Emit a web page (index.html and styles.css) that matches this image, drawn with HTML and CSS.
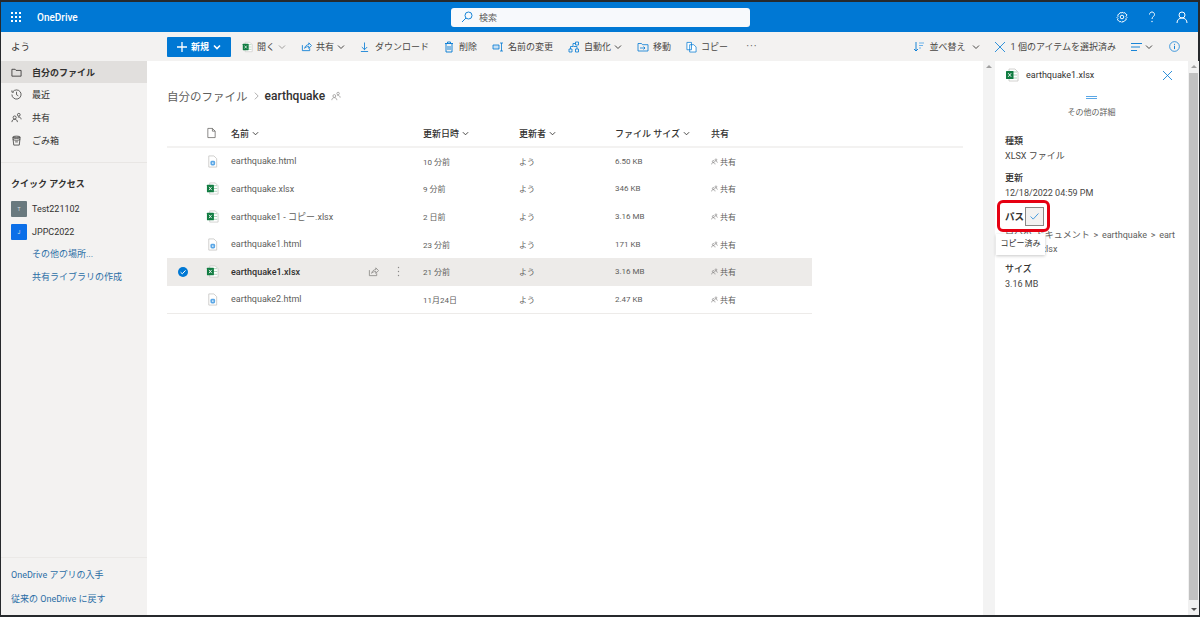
FILE: index.html
```html
<!DOCTYPE html>
<html lang="ja">
<head>
<meta charset="utf-8">
<title>OneDrive</title>
<link rel="stylesheet" href="styles.css">
</head>
<body>
<svg class="defs" width="0" height="0" aria-hidden="true">
  <symbol id="xl" viewBox="0 0 14 14">
    <path d="M4 1h6l3 3v9H4z" fill="#fff" stroke="#c8c6c4" stroke-width=".8"/>
    <path d="M8 4h4M8 7h4M8 10h4" stroke="#a9d3b8" stroke-width="1"/>
    <rect x="1" y="3" width="7.500" height="8" rx=".6" fill="#107c41"/>
    <path d="M3.200 5.200l3 3.600M6.200 5.200l-3 3.600" stroke="#fff" stroke-width=".9"/>
  </symbol>
  <symbol id="doc" viewBox="0 0 14 14">
    <path d="M3 1h5.500L11.500 4v9H3z" fill="#fff" stroke="#c8c6c4" stroke-width=".9"/>
    <rect x="4.800" y="6.200" width="5" height="5" rx="1.600" fill="#5ba7e6"/>
    <circle cx="7.300" cy="8.700" r="1" fill="#d6eafa"/>
  </symbol>
  <symbol id="people" viewBox="0 0 12 12">
    <circle cx="4" cy="6" r="1.700" fill="none" stroke="currentColor" stroke-width=".8"/>
    <path d="M1 11c0-2 1.300-3 3-3s3 1 3 3" fill="none" stroke="currentColor" stroke-width=".8"/>
    <circle cx="8.500" cy="3" r="1.500" fill="none" stroke="currentColor" stroke-width=".8"/>
    <path d="M7.500 5.500c2-.4 3.500.6 3.500 2.500" fill="none" stroke="currentColor" stroke-width=".8"/>
  </symbol>
  <symbol id="chev" viewBox="0 0 8 8"><path d="M1 2.500l3 3 3-3" fill="none" stroke="currentColor" stroke-width="1"/></symbol>
  <symbol id="share" viewBox="0 0 12 12">
    <path d="M1.500 4.500v6h8V8M4 8c.4-2.500 2.300-4 4.500-4V2l3 3-3 3V6C6.500 6 5 6.700 4 8z" fill="none" stroke="currentColor" stroke-width=".9"/>
  </symbol>
</svg>

<div class="app">
  <header class="topbar">
    <svg class="waffle" viewBox="0 0 10 10" width="10" height="10"><g fill="#fff"><rect width="2" height="2"/><rect x="4" width="2" height="2"/><rect x="8" width="2" height="2"/><rect y="4" width="2" height="2"/><rect x="4" y="4" width="2" height="2"/><rect x="8" y="4" width="2" height="2"/><rect y="8" width="2" height="2"/><rect x="4" y="8" width="2" height="2"/><rect x="8" y="8" width="2" height="2"/></g></svg>
    <span class="brand">OneDrive</span>
    <div class="search">
      <svg viewBox="0 0 12 12" width="12" height="12"><circle cx="7.500" cy="4.500" r="3.500" fill="none" stroke="#0078d4" stroke-width=".9"/><path d="M5 7L1 11" stroke="#0078d4" stroke-width=".9"/></svg>
      <span>検索</span>
    </div>
    <div class="top-icons">
      <svg viewBox="0 0 12 12" width="12" height="12"><circle cx="6" cy="6" r="1.800" fill="none" stroke="#fff"/><path d="M6 1l1.200 1 1.600-.4.800 1.400 1.400.8L10 5.500 11 6.500l-1 1 .2 1.300-1.400.6-.8 1.300-1.500-.3L6 11.500l-1-1-1.500.3-.8-1.300-1.400-.6L2 7.500l-1-1 1-1-.2-1.700 1.400-.8.800-1.400 1.600.4z" fill="none" stroke="#fff" stroke-width=".9"/></svg>
      <svg viewBox="0 0 12 12" width="12" height="12"><path d="M3.500 3.500C3.500 2 4.700 1 6 1s2.500 1 2.500 2.500c0 2-2.500 2.200-2.500 4.500" fill="none" stroke="#fff"/><circle cx="6" cy="10.500" r=".7" fill="#fff"/></svg>
      <svg viewBox="0 0 12 12" width="12" height="12"><circle cx="6" cy="4" r="3" fill="none" stroke="#fff"/><path d="M1 12c0-3 2-5 5-5s5 2 5 5" fill="none" stroke="#fff"/></svg>
    </div>
  </header>

  <div class="workspace">
    <nav class="sidenav">
      <div class="user">よう</div>
      <a class="nav-row active">
        <svg viewBox="0 0 12 12" width="11" height="11"><path d="M1 2.500h3.500l1 1.200H11V10H1z" fill="none" stroke="#323130" stroke-width=".9"/></svg>
        <span>自分のファイル</span>
      </a>
      <a class="nav-row">
        <svg viewBox="0 0 12 12" width="11" height="11"><path d="M2 3a5 5 0 1 1-1 3M1 1.500V3.500h2M6 3v3.200l2 1.300" fill="none" stroke="#323130" stroke-width=".8"/></svg>
        <span>最近</span>
      </a>
      <a class="nav-row">
        <svg width="11" height="11" class="ink"><use href="#people"/></svg>
        <span>共有</span>
      </a>
      <a class="nav-row">
        <svg viewBox="0 0 12 12" width="11" height="11"><path d="M2 2.500h8L9 11H3zM2 5c2 1 6 1 8 0M4.500 7.500h3" fill="none" stroke="#323130" stroke-width=".8"/><ellipse cx="6" cy="2.500" rx="4" ry="1.300" fill="none" stroke="#323130" stroke-width=".8"/></svg>
        <span>ごみ箱</span>
      </a>
      <div class="nav-sep"></div>
      <div class="nav-title">クイック アクセス</div>
      <a class="site-row"><i class="avatar slate">T</i><span>Test221102</span></a>
      <a class="site-row"><i class="avatar blue">J</i><span>JPPC2022</span></a>
      <a class="link-row">その他の場所...</a>
      <a class="link-row">共有ライブラリの作成</a>
      <div class="nav-foot">
        <a>OneDrive アプリの入手</a>
        <a>従来の OneDrive に戻す</a>
      </div>
    </nav>

    <div class="main">
      <div class="cmdbar">
        <button class="new-btn">
          <svg viewBox="0 0 10 10" width="10" height="10"><path d="M5 0v10M0 5h10" stroke="#fff" stroke-width="1.300"/></svg>
          <span>新規</span>
          <svg viewBox="0 0 8 8" width="8" height="8"><path d="M1 2.500l3 3 3-3" fill="none" stroke="#fff" stroke-width="1.600"/></svg>
        </button>
        <div class="cmd"><svg width="11" height="12"><use href="#xl"/></svg><span>開く</span><svg width="8" height="8" class="chev faint"><use href="#chev"/></svg></div>
        <div class="cmd"><svg width="11" height="11" class="blue-ic"><use href="#share"/></svg><span>共有</span><svg width="8" height="8" class="chev"><use href="#chev"/></svg></div>
        <div class="cmd wide"><svg viewBox="0 0 10 12" width="9" height="12"><path d="M5 1v8M2 6l3 3 3-3M1 11h8" fill="none" stroke="#0078d4" stroke-width=".9"/></svg><span>ダウンロード</span></div>
        <div class="cmd mid"><svg viewBox="0 0 10 12" width="10" height="12"><path d="M1 2.500h8M3.500 2.500V1h3v1.500M2 2.500V11h6V2.500M4 5v4M6 5v4" fill="none" stroke="#0078d4" stroke-width=".9"/></svg><span>削除</span></div>
        <div class="cmd"><svg viewBox="0 0 12 12" width="12" height="12"><path d="M1 4h6v4H1z" fill="#c7e0f4" stroke="#0078d4" stroke-width=".8"/><path d="M9.500 2v8M8 2h3M8 10h3" fill="none" stroke="#0078d4" stroke-width=".8"/></svg><span>名前の変更</span></div>
        <div class="cmd"><svg viewBox="0 0 12 12" width="12" height="12"><path d="M7.500 1h3v3h-3zM1 8h3v3H1zM7.500 8h3v3h-3zM7.500 2.500H5v3H2.500V8M5.500 5.500H9V8" fill="none" stroke="#0078d4" stroke-width=".8"/></svg><span>自動化</span><svg width="8" height="8" class="chev"><use href="#chev"/></svg></div>
        <div class="cmd"><svg viewBox="0 0 12 12" width="12" height="12"><path d="M1 2.500h3.500l1 1.200H11V10H1zM3 7h5M6.500 5.500L8 7 6.500 8.500" fill="none" stroke="#0078d4" stroke-width=".8"/></svg><span>移動</span></div>
        <div class="cmd"><svg viewBox="0 0 12 12" width="11" height="12"><path d="M1 1h5v8H1zM4 3.500h4.500L11 6v5.500H4z" fill="#fff" stroke="#0078d4" stroke-width=".8"/></svg><span>コピー</span></div>
        <div class="cmd more">···</div>
        <div class="cmd-right">
          <div class="cmd sort"><svg viewBox="0 0 12 12" width="12" height="12"><path d="M3 1v9M1 8l2 2 2-2" fill="none" stroke="#0078d4" stroke-width=".9"/><path d="M6 2h5M6 4.500h4M6 7h2" stroke="#6db2ea" stroke-width="1.100"/></svg><span>並べ替え</span><svg width="8" height="8" class="chev"><use href="#chev"/></svg></div>
          <div class="cmd sel"><svg viewBox="0 0 10 10" width="10" height="10"><path d="M0 0l10 10M10 0L0 10" stroke="#0078d4" stroke-width=".8"/></svg><span>1 個のアイテムを選択済み</span></div>
          <div class="cmd view"><svg viewBox="0 0 11 10" width="11" height="10"><path d="M0 1.500h11M0 5h9M0 8.500h6" stroke="#0078d4" stroke-width=".9"/></svg><svg width="8" height="8" class="chev"><use href="#chev"/></svg></div>
          <svg class="info" viewBox="0 0 12 12" width="11" height="11"><circle cx="6" cy="6" r="5.300" fill="none" stroke="#0078d4" stroke-width=".8"/><path d="M6 5.200v3.600" stroke="#0078d4"/><circle cx="6" cy="3.500" r=".6" fill="#0078d4"/></svg>
        </div>
      </div>

      <div class="panes">
        <section class="files">
          <div class="crumbs">
            <span class="crumb">自分のファイル</span>
            <svg viewBox="0 0 6 10" width="5" height="10"><path d="M1 1l4 4-4 4" fill="none" stroke="#8a8886" stroke-width=".8"/></svg>
            <strong>earthquake</strong>
            <svg width="10" height="10" class="muted"><use href="#people"/></svg>
          </div>

          <div class="list-head grid">
            <span></span>
            <svg class="ficon" viewBox="0 0 12 12" width="11" height="12"><path d="M2 1h5l3 3v7H2zM7 1v3h3" fill="none" stroke="#605e5c" stroke-width=".8"/></svg>
            <span class="hcell">名前<svg width="7" height="7"><use href="#chev"/></svg></span>
            <span class="hcell">更新日時<svg width="7" height="7"><use href="#chev"/></svg></span>
            <span class="hcell">更新者<svg width="7" height="7"><use href="#chev"/></svg></span>
            <span class="hcell">ファイル サイズ<svg width="7" height="7"><use href="#chev"/></svg></span>
            <span class="hcell">共有</span>
          </div>

          <div class="rows">
            <div class="row grid"><span></span><svg class="ficon" width="13" height="13"><use href="#doc"/></svg><span class="fname">earthquake.html</span><span class="sm">10 分前</span><span class="sm">よう</span><span class="sm">6.50 KB</span><span class="sm shared"><svg width="7" height="7"><use href="#people"/></svg>共有</span></div>
            <div class="row grid"><span></span><svg class="ficon" width="13" height="13"><use href="#xl"/></svg><span class="fname">earthquake.xlsx</span><span class="sm">9 分前</span><span class="sm">よう</span><span class="sm">346 KB</span><span class="sm shared"><svg width="7" height="7"><use href="#people"/></svg>共有</span></div>
            <div class="row grid"><span></span><svg class="ficon" width="13" height="13"><use href="#xl"/></svg><span class="fname">earthquake1 - コピー.xlsx</span><span class="sm">2 日前</span><span class="sm">よう</span><span class="sm">3.16 MB</span><span class="sm shared"><svg width="7" height="7"><use href="#people"/></svg>共有</span></div>
            <div class="row grid"><span></span><svg class="ficon" width="13" height="13"><use href="#doc"/></svg><span class="fname">earthquake1.html</span><span class="sm">23 分前</span><span class="sm">よう</span><span class="sm">171 KB</span><span class="sm shared"><svg width="7" height="7"><use href="#people"/></svg>共有</span></div>
            <div class="row grid selected">
              <svg class="check" viewBox="0 0 10 10" width="10" height="10"><circle cx="5" cy="5" r="5" fill="#0078d4"/><path d="M2.600 5.200l1.700 1.600 3.200-3.400" fill="none" stroke="#fff" stroke-width="1"/></svg>
              <svg class="ficon" width="13" height="13"><use href="#xl"/></svg>
              <span class="fname strong">
                <span>earthquake1.xlsx</span>
                <span class="row-acts">
                  <svg width="11" height="11" class="muted"><use href="#share"/></svg>
                  <svg viewBox="0 0 3 11" width="3" height="11"><g fill="#8a8886"><circle cx="1.500" cy="1.500" r=".7"/><circle cx="1.500" cy="5.500" r=".7"/><circle cx="1.500" cy="9.500" r=".7"/></g></svg>
                </span>
              </span>
              <span class="sm">21 分前</span><span class="sm">よう</span><span class="sm">3.16 MB</span><span class="sm shared"><svg width="7" height="7"><use href="#people"/></svg>共有</span>
            </div>
            <div class="row grid"><span></span><svg class="ficon" width="13" height="13"><use href="#doc"/></svg><span class="fname">earthquake2.html</span><span class="sm">11月24日</span><span class="sm">よう</span><span class="sm">2.47 KB</span><span class="sm shared"><svg width="7" height="7"><use href="#people"/></svg>共有</span></div>
          </div>
        </section>

        <div class="gutter"><i class="arrow up"></i></div>

        <aside class="details">
          <div class="d-head">
            <svg width="14" height="14"><use href="#xl"/></svg>
            <span class="d-name">earthquake1.xlsx</span>
            <svg class="d-close" viewBox="0 0 10 10" width="9" height="9"><path d="M0 0l10 10M10 0L0 10" stroke="#0078d4" stroke-width=".9"/></svg>
          </div>
          <div class="d-more">
            <svg viewBox="0 0 11 3" width="11" height="3"><path d="M0 .5h11M0 2.500h11" stroke="#5ba7e6"/></svg>
            <span>その他の詳細</span>
          </div>
          <div class="d-label first">種類</div>
          <div class="d-value">XLSX ファイル</div>
          <div class="d-label second">更新</div>
          <div class="d-value">12/18/2022 04:59 PM</div>
          <div class="d-path">
            <span class="d-strong">パス</span>
            <span class="copy"><svg viewBox="0 0 10 8" width="9" height="7"><path d="M.5 4l3 3 6-6.500" fill="none" stroke="#0078d4" stroke-width=".8"/></svg></span>
            <div class="tooltip">コピー済み</div>
            <div class="redbox"></div>
          </div>
          <div class="d-value pathtext">自分の ドキュメント &gt; earthquake &gt; earthquake1.xlsx</div>
          <div class="d-label size">サイズ</div>
          <div class="d-value">3.16 MB</div>
        </aside>

        <div class="scroll"><i class="arrow up"></i><b class="thumb"></b><i class="arrow down"></i></div>
      </div>
    </div>
  </div>
</div>
</body>
</html>
```
FILE: styles.css
```css
* { box-sizing: border-box; }
html, body { margin: 0; height: 100%; }
body {
  background: #fff;
  color: #323130;
  font-family: Roboto, "Noto Sans CJK JP", sans-serif;
  font-size: 9px;
  overflow: hidden;
}
svg { flex: none; display: block; }
.defs { position: absolute; }
a { display: block; }

.app {
  width: 1200px;
  height: 617px;
  border: solid #26292c;
  border-width: 2px 2px 2px 1px;
  display: flex;
  flex-direction: column;
}

/* top bar */
.topbar {
  height: 30px;
  background: #0078d4;
  display: flex;
  align-items: center;
  padding-left: 10px;
  color: #fff;
  flex: none;
}
.brand { margin-left: 16px; font-size: 10px; font-weight: 500; width: 414px; }
.search {
  width: 299px;
  height: 19px;
  background: #f7f9fc;
  border-radius: 3px;
  display: flex;
  align-items: center;
  gap: 6px;
  padding-left: 10px;
  color: #605e5c;
  font-size: 9px;
}
.top-icons { margin-left: auto; display: flex; gap: 18px; padding-right: 10px; }

.workspace { flex: 1; display: flex; min-height: 0; }

/* nav */
.sidenav {
  width: 146px;
  background: #f3f2f1;
  display: flex;
  flex-direction: column;
  flex: none;
}
.user { height: 29px; padding: 8px 0 0 10px; font-size: 9.500px; line-height: 14px; }
.nav-row {
  height: 23px;
  display: flex;
  align-items: center;
  gap: 10px;
  padding-left: 10px;
}
.nav-row.active { background: #e1dfdd; font-weight: 700; height: 22px; }
.ink { color: #323130; }
.nav-sep { height: 1px; background: #e8e6e4; margin-top: 10px; }
.nav-title { font-weight: 700; padding: 14px 0 0 10px; line-height: 14px; height: 34px; }
.site-row {
  height: 23px;
  display: flex;
  align-items: center;
  gap: 5px;
  padding-left: 10px;
}
.avatar {
  width: 16px;
  height: 16px;
  border-radius: 1px;
  color: #dfe3e6;
  font-style: normal;
  font-size: 5px;
  display: flex;
  align-items: center;
  justify-content: center;
}
.slate { background: #69797e; }
.blue { background: #0b6fe8; }
.link-row { height: 23px; line-height: 23px; padding-left: 31px; color: #2b6ea6; }
.nav-foot {
  margin-top: auto;
  border-top: 1px solid #ebe9e7;
  padding: 5px 0 4px 10px;
  color: #2b6ea6;
  line-height: 24px;
}

/* command bar */
.main { flex: 1; min-width: 0; display: flex; flex-direction: column; }
.cmdbar {
  height: 29px;
  background: #f3f2f1;
  display: flex;
  align-items: center;
  gap: 15px;
  padding-left: 20px;
  flex: none;
}
.new-btn {
  width: 64px;
  height: 20px;
  margin-right: -4px;
  border: 0;
  border-radius: 1px;
  background: #0078d4;
  color: #fff;
  font: 700 9px Roboto, "Noto Sans CJK JP", sans-serif;
  display: flex;
  align-items: center;
  justify-content: center;
  gap: 4px;
}
.cmd { display: flex; align-items: center; gap: 4px; white-space: nowrap; color: #484644; }
.wide { gap: 6px; }
.mid { gap: 5px; }
.chev { margin-left: -1px; color: #484644; }
.chev.faint { color: #a19f9d; }
.blue-ic { color: #0078d4; }
.more { letter-spacing: 1px; font-size: 11px; color: #605e5c; margin-left: 3px; }
.cmd-right { margin-left: auto; display: flex; align-items: center; gap: 15px; padding-right: 18px; }
.sort { gap: 5px; }
.sort .chev { margin-left: 1px; }
.sel { gap: 6px; }
.view { gap: 3px; }
.view .chev { margin-left: 0; }
.info { margin-left: 1px; }

/* panes */
.panes { flex: 1; display: flex; min-height: 0; }
.files { width: 836px; padding: 0 20px; flex: none; }
.crumbs {
  height: 59px;
  padding-top: 10px;
  display: flex;
  align-items: center;
  gap: 6px;
  font-size: 11.500px;
}
.crumb { color: #605e5c; }
.crumbs strong { font-weight: 500; font-size: 12px; }
.muted { color: #8a8886; }

.grid {
  display: grid;
  grid-template-columns: 35px 29px 192px 96px 96px 96px 101px;
  align-items: center;
}
.ficon { margin-left: 4px; }
.list-head {
  height: 28px;
  border-bottom: 2px solid #f3f2f1;
  font-weight: 500;
  width: 796px;
}
.hcell { display: flex; align-items: center; gap: 3px; color: #323130; font-weight: 500; }
.rows { width: 645px; }
.row { height: 27.600px; border-bottom: 1px solid transparent; }
.row:last-child { border-bottom-color: #edebe9; }
.row.selected { background: #edebe9; }
.check { margin-left: 11px; }
.fname { font-size: 9px; color: #605e5c; white-space: nowrap; }
.fname.strong { color: #323130; font-weight: 500; display: flex; align-items: center; }
.row-acts { margin-left: auto; margin-right: 23px; display: flex; align-items: center; gap: 18px; }
.sm { font-size: 8px; color: #605e5c; }
.shared { display: flex; align-items: center; gap: 2px; }

/* scroll */
.gutter { width: 12px; background: #f3f3f3; flex: none; padding-top: 4px; }
.arrow { display: block; width: 0; height: 0; margin: 0 auto; border: 3px solid transparent; }
.arrow.up { border-bottom-color: #a0a0a0; border-top-width: 0; }
.arrow.down { border-top-color: #505050; border-bottom-width: 0; }
.scroll {
  width: 11px;
  flex: none;
  background: #f1f1f1;
  display: flex;
  flex-direction: column;
  padding: 4px 0;
}
.thumb { flex: 1; background: #c1c1c1; margin: 5px 1px 8px; }

/* details */
.details { width: 193px; padding: 0 10px; flex: none; position: relative; }
.d-head { display: flex; align-items: center; gap: 7px; height: 28px; }
.d-name { font-size: 9px; }
.d-close { margin-left: auto; margin-right: 6px; }
.d-more {
  height: 35px;
  padding-top: 7px;
  display: flex;
  flex-direction: column;
  align-items: center;
  gap: 7px;
  font-size: 8px;
  color: #605e5c;
}
.d-label { font-size: 9px; line-height: 14px; font-weight: 500; }
.d-label.first { margin-top: 10px; }
.d-label.second { margin-top: 8px; }
.d-label.size { margin-top: 6px; }
.d-value { font-size: 9px; line-height: 14px; margin-top: 1px; color: #484644; }
.d-path { position: relative; display: flex; align-items: center; gap: 1px; height: 20px; margin-top: 6px; }
.d-strong { font-weight: 700; font-size: 9.500px; }
.copy {
  width: 19px;
  height: 19px;
  border: 1px solid #8a8886;
  background: #f3f2f1;
  display: flex;
  align-items: center;
  justify-content: center;
}
.pathtext {
  width: 173px;
  word-break: break-all;
  word-spacing: 1.500px;
  margin-top: 2px;
  color: #605e5c;
}
.tooltip {
  position: absolute;
  left: -9px;
  top: 28px;
  width: 49px;
  height: 21px;
  background: #fff;
  box-shadow: 0 1px 3px rgba(0, 0, 0, .22);
  font-size: 8px;
  line-height: 20px;
  text-align: center;
  z-index: 2;
}
.redbox {
  position: absolute;
  left: -8px;
  top: -6px;
  width: 53px;
  height: 32px;
  border: 3px solid #e60012;
  border-radius: 6px;
  z-index: 3;
}
```
